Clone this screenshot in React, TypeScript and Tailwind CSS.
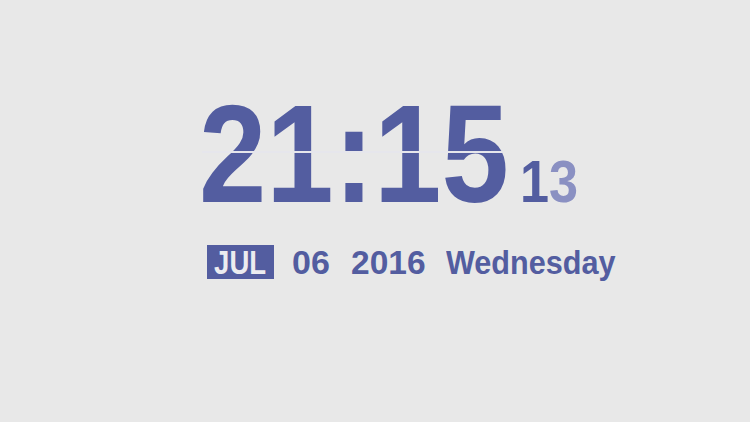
import React from 'react';

const font = { fontFamily: '"Liberation Sans", Arial, sans-serif' };

const App: React.FC = () => {
  return (
    <div className="w-[750px] h-[422px] bg-[#e8e8e8] overflow-hidden" style={font}>
      <div className="flex flex-col items-start pl-[199px] pt-[84px]">
        {/* time */}
        <div className="flex items-baseline font-bold text-[#535da0]">
          <div className="relative w-[306px] whitespace-nowrap text-[140px] leading-none">
            <span className="inline-block origin-left scale-x-[0.865]">21:15</span>
            {/* flip split */}
            <div className="absolute left-[3px] right-[2px] top-[67px] h-[2px] bg-[#e6e6ec]"></div>
          </div>
          <div className="ml-[15px] w-[58px] whitespace-nowrap text-[60px] leading-none">
            <span className="inline-block origin-left scale-x-[0.87]">
              <span>1</span>
              <span className="text-[#8a90c2]">3</span>
            </span>
          </div>
        </div>

        {/* date */}
        <div className="flex items-center mt-[21px] ml-[8px] h-[34px] font-bold text-[34px] leading-none text-[#535da0] whitespace-nowrap">
          <div className="flex items-center justify-center w-[67px] h-[34px] bg-[#535da0] text-[#ececf0]">
            <span className="inline-block scale-x-[0.81]">JUL</span>
          </div>
          <div className="ml-[18px] w-[37px]">
            <span className="inline-block origin-left">06</span>
          </div>
          <div className="ml-[22px] w-[72px]">
            <span className="inline-block origin-left scale-x-[0.985]">2016</span>
          </div>
          <div className="ml-[23px] w-[169px]">
            <span className="inline-block origin-left scale-x-[0.9]">Wednesday</span>
          </div>
        </div>
      </div>
    </div>
  );
};

export default App;
